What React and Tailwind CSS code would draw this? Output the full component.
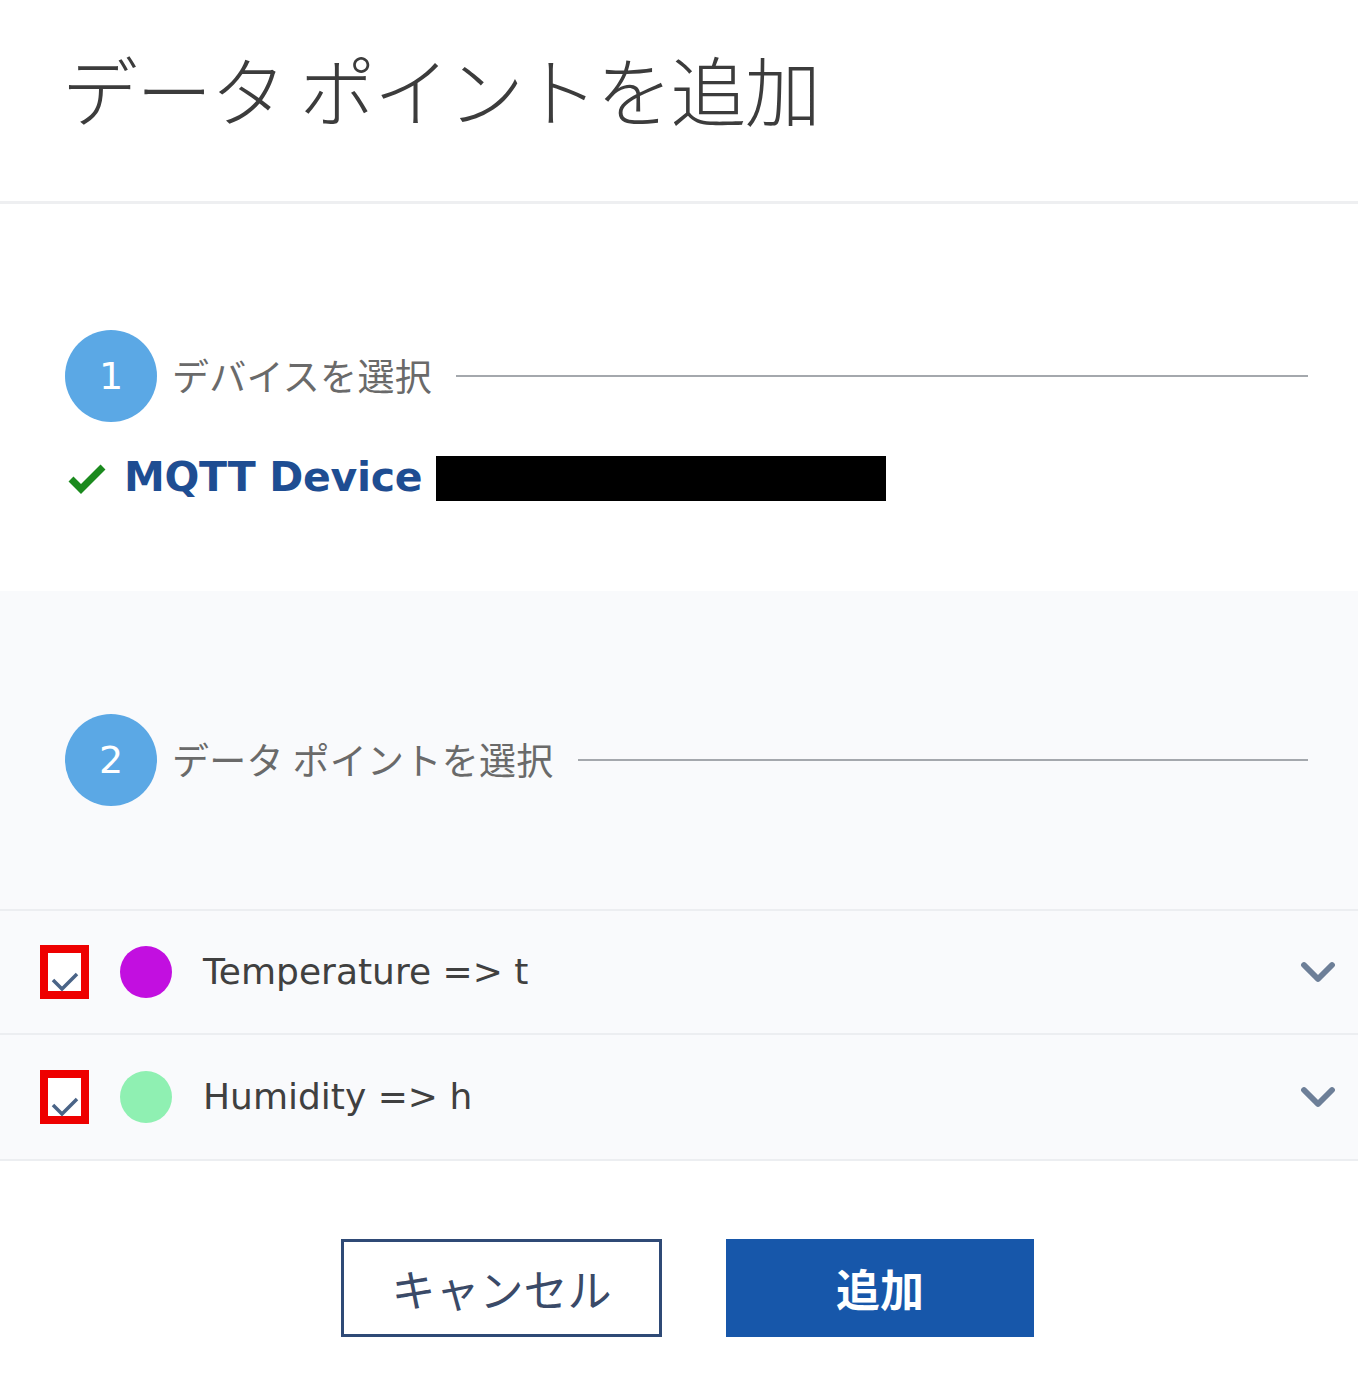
import { ChevronDown } from 'lucide-react'

const jp = { fontFamily: '"Noto Sans CJK JP", "Noto Sans", sans-serif' }

function Step({ n, label }) {
  return (
    <div className="flex items-center">
      <div
        className="w-[92px] h-[92px] rounded-full bg-[#5ba8e5] flex items-center justify-center text-white text-[38px] shrink-0"
        style={{ fontFamily: '"DejaVu Sans", sans-serif' }}
      >
        {n}
      </div>
      <div className="ml-[15px] text-[37px] text-[#6a6a6a] whitespace-nowrap tracking-[0.3px]" style={jp}>
        {label}
      </div>
      <div className="flex-1 ml-[24px] h-[2px] bg-[#a4a8ad]" />
    </div>
  )
}

function PointRow({ color, label, h }) {
  return (
    <div className={`${h} flex items-center border-b-[2px] border-[#eceef1] bg-[#f9fafc] pl-[40px] pr-[12px]`}>
      <div className="w-[49px] h-[54px] border-[8px] border-[#ee0000] bg-white flex items-end justify-center shrink-0">
        <svg width="30" height="22" viewBox="0 0 30 22" className="mb-[-2px]">
          <path d="M3 9 L12 18 L27 3" fill="none" stroke="#4a6487" strokeWidth="3.5" />
        </svg>
      </div>
      <div className="ml-[31px] w-[52px] h-[52px] rounded-full shrink-0" style={{ background: color }} />
      <div
        className="ml-[31px] text-[36px] text-[#404040]"
        style={{ fontFamily: '"DejaVu Sans", sans-serif' }}
      >
        {label}
      </div>
      <div className="flex-1" />
      <ChevronDown className="w-[56px] h-[56px] text-[#6d7f98]" strokeWidth={2.5} />
    </div>
  )
}

export default function App() {
  return (
    <div className="w-full bg-white">
      {/* header */}
      <div className="h-[204px] pl-[62px] pt-[44px] border-b-[3px] border-[#eeeff1]">
        <div className="text-[76px] leading-[88px] font-light text-[#3c3c3c] tracking-[-1.8px]" style={jp}>
          データ ポイントを追加
        </div>
      </div>

      {/* step 1 */}
      <div className="pl-[65px] pr-[50px] pt-[126px] h-[387px]">
        <Step n="1" label="デバイスを選択" />
        <div className="flex items-center mt-[33px] h-[46px]">
          <svg width="40" height="32" viewBox="0 0 40 32" className="ml-[2px]">
            <path d="M4 17 L14 27 L36 5" fill="none" stroke="#1b8a1e" strokeWidth="7" />
          </svg>
          <div
            className="ml-[17px] text-[41px] font-bold text-[#1e4d92] tracking-[-0.3px]"
            style={{ fontFamily: '"DejaVu Sans", sans-serif' }}
          >
            MQTT Device
          </div>
          <div className="ml-[14px] w-[450px] h-[45px] bg-black" />
        </div>
      </div>

      {/* step 2 */}
      <div className="bg-[#f9fafc] pl-[65px] pr-[50px] pt-[123px] h-[318px]">
        <Step n="2" label="データ ポイントを選択" />
      </div>

      <div className="border-t-[2px] border-[#eceef1]">
        <PointRow color="#c20fe0" label="Temperature => t" h="h-[124px]" />
        <PointRow color="#8ff0b2" label="Humidity => h" h="h-[126px]" />
      </div>

      {/* footer */}
      <div className="h-[229px] pt-[78px] flex justify-center gap-[64px] pl-[17px]">
        <button
          className="w-[321px] h-[98px] border-[3px] border-[#2f4a76] bg-white text-[44px] text-[#3a4a68]"
          style={jp}
        >
          キャンセル
        </button>
        <button
          className="w-[308px] h-[98px] bg-[#1757aa] text-[44px] text-white font-bold"
          style={jp}
        >
          追加
        </button>
      </div>
    </div>
  )
}
